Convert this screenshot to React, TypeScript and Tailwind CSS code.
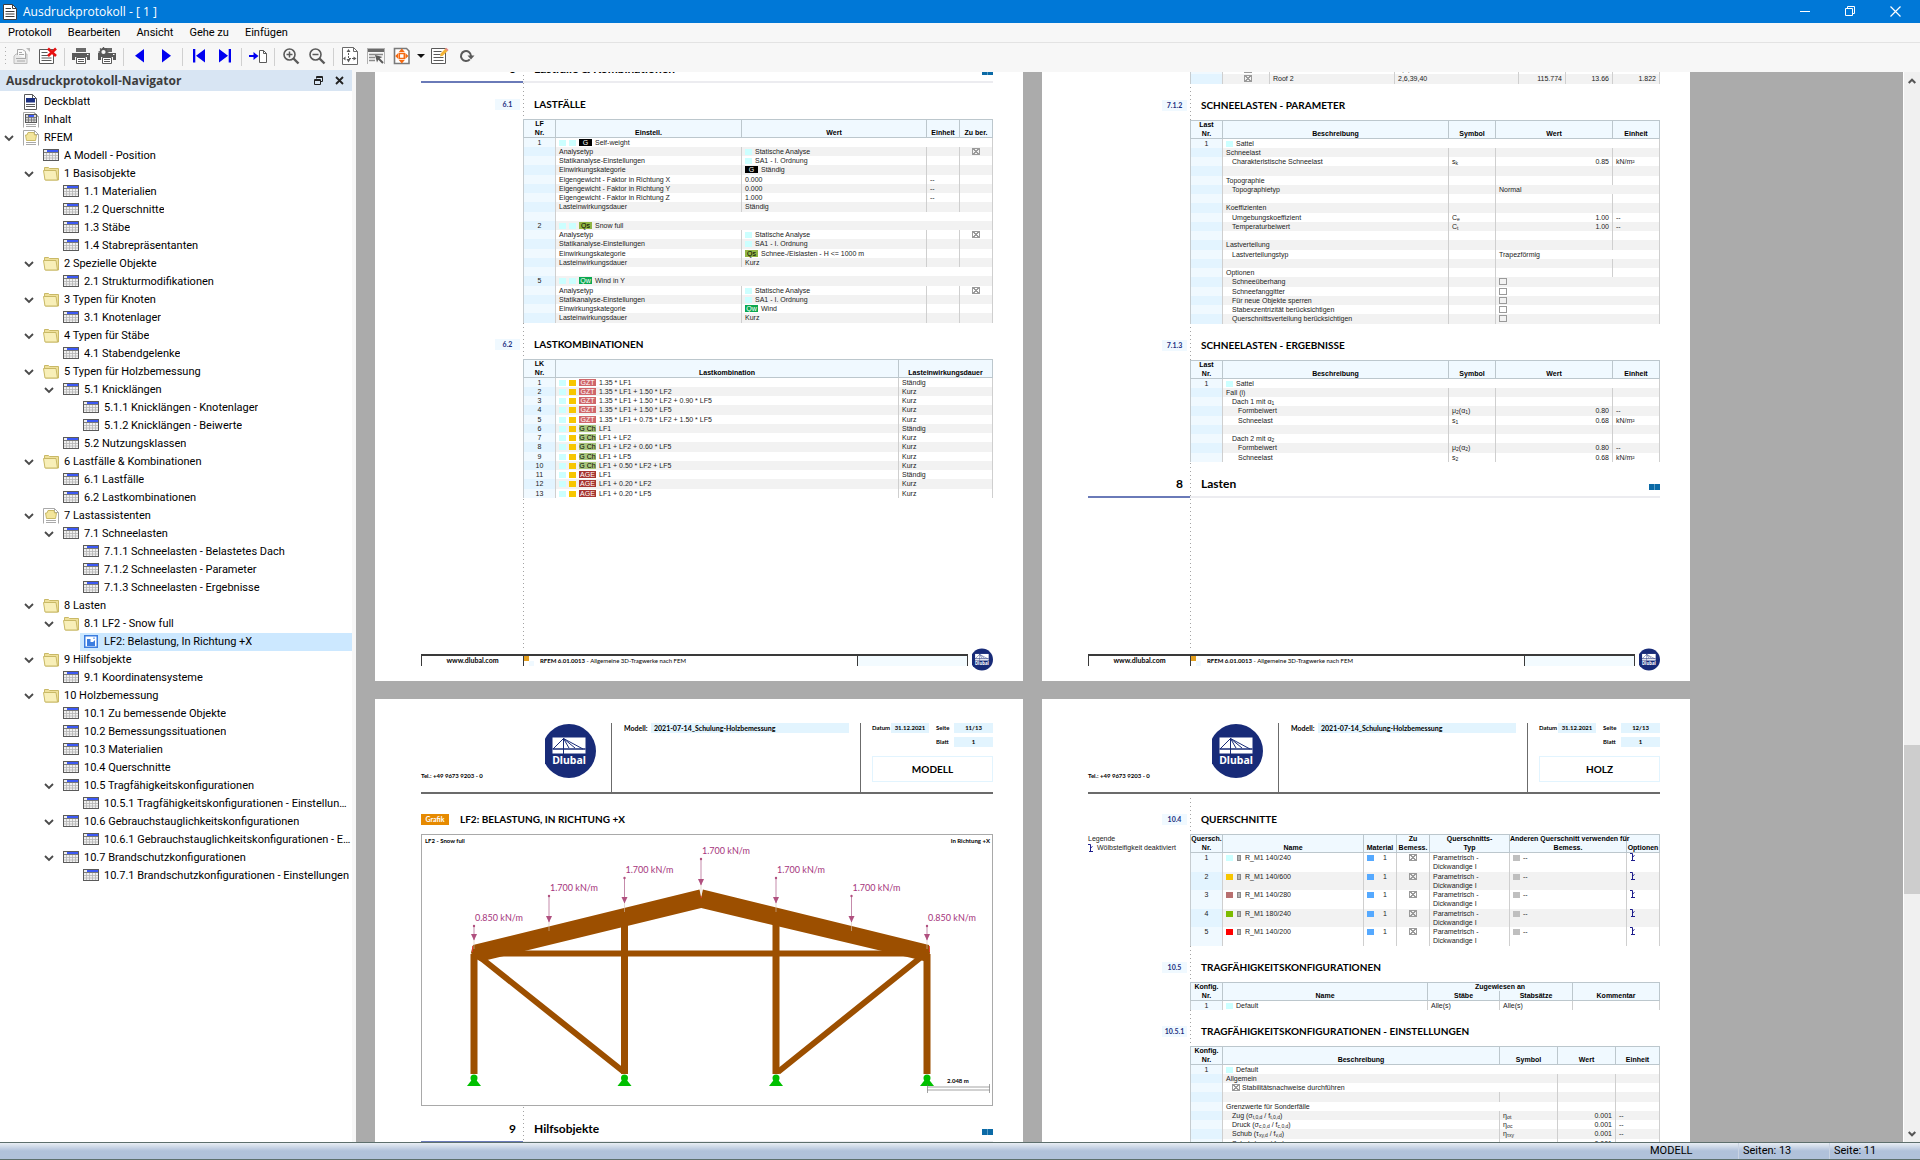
import type { ReactNode } from "react";

/* ---------- navigator data ---------- */

type IconKind = "cover" | "contents" | "model" | "table" | "folder" | "picture";

interface TreeNode {
  level: number;
  icon: IconKind;
  label: string;
  open?: boolean;
  selected?: boolean;
}

const TREE: TreeNode[] = [
  { level: 0, icon: "cover", label: "Deckblatt" },
  { level: 0, icon: "contents", label: "Inhalt" },
  { level: 0, icon: "model", label: "RFEM", open: true },
  { level: 1, icon: "table", label: "A Modell - Position" },
  { level: 1, icon: "folder", label: "1 Basisobjekte", open: true },
  { level: 2, icon: "table", label: "1.1 Materialien" },
  { level: 2, icon: "table", label: "1.2 Querschnitte" },
  { level: 2, icon: "table", label: "1.3 Stäbe" },
  { level: 2, icon: "table", label: "1.4 Stabrepräsentanten" },
  { level: 1, icon: "folder", label: "2 Spezielle Objekte", open: true },
  { level: 2, icon: "table", label: "2.1 Strukturmodifikationen" },
  { level: 1, icon: "folder", label: "3 Typen für Knoten", open: true },
  { level: 2, icon: "table", label: "3.1 Knotenlager" },
  { level: 1, icon: "folder", label: "4 Typen für Stäbe", open: true },
  { level: 2, icon: "table", label: "4.1 Stabendgelenke" },
  { level: 1, icon: "folder", label: "5 Typen für Holzbemessung", open: true },
  { level: 2, icon: "table", label: "5.1 Knicklängen", open: true },
  { level: 3, icon: "table", label: "5.1.1 Knicklängen - Knotenlager" },
  { level: 3, icon: "table", label: "5.1.2 Knicklängen - Beiwerte" },
  { level: 2, icon: "table", label: "5.2 Nutzungsklassen" },
  { level: 1, icon: "folder", label: "6 Lastfälle & Kombinationen", open: true },
  { level: 2, icon: "table", label: "6.1 Lastfälle" },
  { level: 2, icon: "table", label: "6.2 Lastkombinationen" },
  { level: 1, icon: "model", label: "7 Lastassistenten", open: true },
  { level: 2, icon: "table", label: "7.1 Schneelasten", open: true },
  { level: 3, icon: "table", label: "7.1.1 Schneelasten - Belastetes Dach" },
  { level: 3, icon: "table", label: "7.1.2 Schneelasten - Parameter" },
  { level: 3, icon: "table", label: "7.1.3 Schneelasten - Ergebnisse" },
  { level: 1, icon: "folder", label: "8 Lasten", open: true },
  { level: 2, icon: "folder", label: "8.1 LF2 - Snow full", open: true },
  { level: 3, icon: "picture", label: "LF2: Belastung, In Richtung +X", selected: true },
  { level: 1, icon: "folder", label: "9 Hilfsobjekte", open: true },
  { level: 2, icon: "table", label: "9.1 Koordinatensysteme" },
  { level: 1, icon: "folder", label: "10 Holzbemessung", open: true },
  { level: 2, icon: "table", label: "10.1 Zu bemessende Objekte" },
  { level: 2, icon: "table", label: "10.2 Bemessungssituationen" },
  { level: 2, icon: "table", label: "10.3 Materialien" },
  { level: 2, icon: "table", label: "10.4 Querschnitte" },
  { level: 2, icon: "table", label: "10.5 Tragfähigkeitskonfigurationen", open: true },
  { level: 3, icon: "table", label: "10.5.1 Tragfähigkeitskonfigurationen - Einstellungen" },
  { level: 2, icon: "table", label: "10.6 Gebrauchstauglichkeitskonfigurationen", open: true },
  { level: 3, icon: "table", label: "10.6.1 Gebrauchstauglichkeitskonfigurationen - Einstellungen" },
  { level: 2, icon: "table", label: "10.7 Brandschutzkonfigurationen", open: true },
  { level: 3, icon: "table", label: "10.7.1 Brandschutzkonfigurationen - Einstellungen" },
];

const INDENT = ["pl-0", "pl-5", "pl-10", "pl-15"];

/* ---------- tree icons ---------- */

function TreeIcon({ kind }: { kind: IconKind }) {
  if (kind === "folder")
    return (
      <svg width="16" height="16" viewBox="0 0 16 16" className="shrink-0" aria-hidden>
        <path d="M1.5 4V1.500h4l1 1h9v11.500H2.500z" fill="#efe09a" stroke="#c9b966" />
        <path d="M.5 4.500h12.500l1.500 9.500H2z" fill="#f8efb8" stroke="#c9b966" />
      </svg>
    );
  if (kind === "table")
    return (
      <svg width="16" height="16" viewBox="0 0 16 16" className="shrink-0" aria-hidden>
        <rect x=".5" y="1.500" width="15" height="11" fill="#f0f0f0" stroke="#5a5a5a" />
        <path d="M4 2h11v2H4z" fill="#3d5af5" />
        <path d="M1 4.500h14" stroke="#7a7a7a" />
        <path d="M3.500 5v7M6.500 5v7M9.500 5v7M12.500 5v7M1 7.500h14M1 10h14" stroke="#b4b4b4" strokeWidth=".8" />
      </svg>
    );
  if (kind === "picture")
    return (
      <svg width="16" height="16" viewBox="0 0 16 16" className="shrink-0" aria-hidden>
        <rect x="1.750" y="1.750" width="12.500" height="11.500" fill="#fff" stroke="#3b7de0" strokeWidth="1.500" />
        <path d="M4 5h3.500v3H10l2-2v6H4z" fill="#3b7de0" />
        <path d="M10 3.500h2v1.500h-2z" fill="#8fb6f0" />
      </svg>
    );
  if (kind === "cover")
    return (
      <svg width="16" height="16" viewBox="0 0 16 16" className="shrink-0" aria-hidden>
        <path d="M1.500.500h8l4 4v11h-12z" fill="#fff" stroke="#5a5a5a" />
        <path d="M9.500.500v4h4" fill="none" stroke="#5a5a5a" />
        <path d="M3 4h9v4.500H3z" fill="#1b2f80" />
        <path d="M3 10.500h9M3 12.500h9" stroke="#5a5a5a" />
      </svg>
    );
  return (
    <svg width="16" height="16" viewBox="0 0 16 16" className="shrink-0" aria-hidden>
      <path d="M.5 15.500v-15h11l4 4v11" fill="#fff" stroke="#a9a9a9" />
      <path d="M11.500.500v4h4" fill="none" stroke="#a9a9a9" />
      <path d="M3 12.500h10M3 14.500h10" stroke="#a9a9a9" />
      {kind === "contents" ? (
        <>
          <rect x="2.500" y="2.500" width="11" height="8" fill="#d9d9d9" stroke="#5a5a5a" />
          <path d="M5 3h6v2H5z" fill="#3d5af5" />
          <path d="M5.500 3v7M8.500 5v5M11 5v5M3 5.500h10M3 8h10" stroke="#6d6d6d" strokeWidth=".8" />
        </>
      ) : (
        <path d="M2.500 5h1.500l1-2.500h6l.5 2.500h2l-1 5.500h-9z" fill="#f3e59c" stroke="#c9b966" />
      )}
    </svg>
  );
}

function Navigator() {
  return (
    <aside className="flex w-[352px] shrink-0 flex-col bg-white">
      <header className="flex h-[21px] items-center bg-[#d8e5f3] pl-[6px] pr-[8px]">
        <h2 className="flex-1 font-['Open_Sans',sans-serif] text-[12px] font-bold leading-4 text-[#3c3c3c]">
          Ausdruckprotokoll-Navigator
        </h2>
        <button type="button" aria-label="Abdocken" className="mr-3">
          <svg width="9" height="9" viewBox="0 0 9 9" fill="none" stroke="#222" aria-hidden>
            <path d="M2.500 2.500v-2h6v5h-2M2.500 1.500h6" />
            <path d="M.5 3.500h6v5h-6zM.5 4.500h6" />
          </svg>
        </button>
        <button type="button" aria-label="Schließen">
          <svg width="9" height="9" viewBox="0 0 9 9" stroke="#222" strokeWidth="1.800" aria-hidden>
            <path d="M1 1l7 7M8 1l-7 7" />
          </svg>
        </button>
      </header>
      <ul className="pt-[2px] font-['Roboto',sans-serif] text-[11px] leading-[18px] text-black">
        {TREE.map((n) => (
          <li key={n.label} className={`flex h-[18px] ${INDENT[n.level]}`}>
            <span className="flex w-5 shrink-0 items-center pl-1">
              {n.open && (
                <svg width="10" height="7" viewBox="0 0 10 7" fill="none" stroke="#4a4a4a" strokeWidth="1.800" aria-hidden>
                  <path d="M1 1l4 4 4-4" />
                </svg>
              )}
            </span>
            <button
              type="button"
              className={`flex min-w-0 flex-1 items-center gap-[5px] pl-[3px] text-left ${n.selected ? "bg-[#cce8ff]" : ""}`}
            >
              <TreeIcon kind={n.icon} />
              <span className="truncate">{n.label}</span>
            </button>
          </li>
        ))}
      </ul>
    </aside>
  );
}

/* ---------- window chrome ---------- */

function TitleBar() {
  return (
    <header className="flex h-[23px] shrink-0 items-center bg-[#0078d7] pl-[3px] pr-[2px] text-white">
      <svg width="14" height="16" viewBox="0 0 14 16" aria-hidden>
        <path d="M.5.500h9l4 4v11H.5z" fill="#fff" stroke="#3d3d3d" />
        <path d="M9.500.500v4h4" fill="none" stroke="#3d3d3d" />
        <path d="M2.500 4.500H8M2.500 7.500h9M2.500 10h9M2.500 12.500h9" stroke="#3d3d3d" />
      </svg>
      <h1 className="flex-1 pl-[6px] font-['Open_Sans',sans-serif] text-[12px] leading-4">Ausdruckprotokoll - [ 1 ]</h1>
      <button type="button" aria-label="Minimieren" className="flex h-5 w-[45px] items-center justify-center">
        <svg width="11" height="11" viewBox="0 0 11 11" stroke="#fff" aria-hidden>
          <path d="M0 5.500h10" />
        </svg>
      </button>
      <button type="button" aria-label="Wiederherstellen" className="flex h-5 w-[45px] items-center justify-center">
        <svg width="11" height="11" viewBox="0 0 11 11" stroke="#fff" fill="none" aria-hidden>
          <path d="M.5 2.500h7v7h-7zM2.500 2.500v-2h7v7h-2" />
        </svg>
      </button>
      <button type="button" aria-label="Fenster schließen" className="flex h-5 w-[45px] items-center justify-center">
        <svg width="11" height="11" viewBox="0 0 11 11" stroke="#fff" strokeWidth="1.200" aria-hidden>
          <path d="M.5.500l10 10M10.500.500l-10 10" />
        </svg>
      </button>
    </header>
  );
}

function Tool({ label, children }: { label: string; children: ReactNode }) {
  return (
    <button type="button" aria-label={label} title={label} className="flex h-[25px] w-[26px] items-center justify-center">
      <svg width="18" height="18" viewBox="0 0 18 18" fill="none" aria-hidden>
        {children}
      </svg>
    </button>
  );
}

function Sep() {
  return <span className="mx-[3px] h-[18px] w-px bg-[#d0d0d0]" />;
}

function Printer() {
  return (
    <g>
      <path d="M4 1h10v4H4z" fill="#6a6a6a" />
      <path d="M0 6h18v7h-3v-3H3v3H0z" fill="#5a5a5a" />
      <path d="M4.500 10.500h9v6h-9z" fill="#fff" stroke="#5a5a5a" />
      <path d="M6 12.500h6M6 14.500h6" stroke="#5a5a5a" />
      <path d="M15 7.500h1.500" stroke="#fff" />
    </g>
  );
}

function ToolBar() {
  return (
    <div className="flex h-[27px] shrink-0 items-start bg-[#f7f7f7] pl-1 [&>span]:self-center">
      <svg width="5" height="25" viewBox="0 0 5 25" aria-hidden>
        <path d="M1 4h1v1H1zM1 8h1v1H1zM1 12h1v1H1zM1 16h1v1H1zM1 20h1v1H1z" fill="#b0b0b0" />
      </svg>
      <Tool label="Öffnen">
        <path d="M1 9l2-2h11v9.500H1z" fill="#e9e9e9" stroke="#bdbdbd" />
        <path d="M4.500 8V2.500h5l3 2V11" fill="#fafafa" stroke="#a8a8a8" />
        <path d="M6 5.500h3M6 7.500h5M3 11.500h10M4 14h8" stroke="#a8a8a8" />
        <path d="M13 1h4v4z" fill="#bdbdbd" />
      </Tool>
      <Tool label="Ausdruckprotokoll löschen">
        <path d="M.5 2.500h14v14H.5z" fill="#fff" stroke="#5a5a5a" />
        <path d="M2.500 5.500h6M2.500 8.500h8M2.500 11h10M2.500 13.500h10" stroke="#5a5a5a" />
        <path d="M9 1.500l8 7.500M17 1.500l-8 7.500" stroke="#e81111" strokeWidth="2.600" />
      </Tool>
      <Sep />
      <Tool label="Drucken">
        <Printer />
      </Tool>
      <Tool label="Druckeinstellungen">
        <Printer />
        <circle cx="5.500" cy="5" r="3" fill="#f7f7f7" stroke="#5a5a5a" strokeWidth="1.800" />
        <path d="M5.500 0v2M5.500 8v2M.5 5h2M8.500 5h2M2 1.500l1.300 1.300M9 1.500L7.700 2.800M2 8.500l1.300-1.300M9 8.500L7.700 7.200" stroke="#5a5a5a" strokeWidth="1.400" />
      </Tool>
      <Sep />
      <Tool label="Vorherige Seite">
        <path d="M13 2v13.500L4 8.700z" fill="#0000f0" />
      </Tool>
      <Tool label="Nächste Seite">
        <path d="M5 2v13.500l9-6.800z" fill="#0000f0" />
      </Tool>
      <Sep />
      <Tool label="Erste Seite">
        <path d="M3 2h2.300v13.500H3zM15 2v13.500L6 8.700z" fill="#0000f0" />
      </Tool>
      <Tool label="Letzte Seite">
        <path d="M12.700 2H15v13.500h-2.300zM3 2v13.500l9-6.800z" fill="#0000f0" />
      </Tool>
      <Sep />
      <Tool label="Gehe zu Seite">
        <path d="M0 8h4.500V5L9.500 9l-5 4v-3H0z" fill="#0000f0" />
        <path d="M10.500 3.500h4l3 3v9h-7z" fill="#fff" stroke="#5a5a5a" />
        <path d="M14.500 3.500v3h3" stroke="#5a5a5a" />
      </Tool>
      <Sep />
      <Tool label="Vergrößern">
        <circle cx="7.500" cy="7.500" r="5.500" stroke="#5a5a5a" strokeWidth="1.600" />
        <path d="M4.500 7.500h6M7.500 4.500v6" stroke="#5a5a5a" strokeWidth="1.500" />
        <path d="M11.500 11.500l5 5" stroke="#5a5a5a" strokeWidth="2.400" />
      </Tool>
      <Tool label="Verkleinern">
        <circle cx="7.500" cy="7.500" r="5.500" stroke="#5a5a5a" strokeWidth="1.600" />
        <path d="M4.500 7.500h6" stroke="#5a5a5a" strokeWidth="1.500" />
        <path d="M11.500 11.500l5 5" stroke="#5a5a5a" strokeWidth="2.400" />
      </Tool>
      <Sep />
      <Tool label="Ganze Seite">
        <path d="M1.500.500h11l4 4v13h-15z" fill="#fff" stroke="#6a6a6a" />
        <path d="M12.500.500v4h4" stroke="#6a6a6a" />
        <path d="M7.500 3v8.500h6" stroke="#5a5a5a" strokeDasharray="2 1" />
        <path d="M5.500 5l2-3 2 3zM5.500 12l2 3.500 2-3.500zM12.500 9.500l3 2-3 2zM4.500 9.500l-2.500 2 2.500 2z" fill="#5a5a5a" />
      </Tool>
      <Tool label="Auswahl">
        <path d="M0 1.500h18v3.500H0z" fill="#6a6a6a" />
        <path d="M.5 1v16M17.500 1v16" stroke="#b0b0b0" />
        <path d="M2 7.500h14M2 10.500h6M2 13.500h6" stroke="#8a8a8a" strokeWidth="1.500" />
        <path d="M8 8l7.500 2-2.800 1.300 4 4-1.400 1.400-4-4-1.300 2.800z" fill="#5a5a5a" />
      </Tool>
      <Tool label="Seitenbreite">
        <path d="M1.500 1.500h12l2.500 2.500v12.500H1.500z" fill="#fff" stroke="#7a7a7a" strokeWidth="1.600" />
        <path d="M8.800 1.500l3 3.500h-6zM8.800 16.500l3-3.500h-6zM2.200 9l3-3v6zM15.400 9l-3-3v6z" fill="#f56a12" />
        <path d="M6.300 6.500h5v5h-5z" stroke="#f56a12" strokeWidth="1.500" />
      </Tool>
      <button type="button" aria-label="Weitere Ansichten" className="flex h-[26px] w-3 items-center justify-center">
        <svg width="8" height="4" viewBox="0 0 8 4" aria-hidden>
          <path d="M0 0h8L4 4z" fill="#111" />
        </svg>
      </button>
      <Tool label="Protokoll bearbeiten">
        <path d="M.5 1.500h14v15H.5z" fill="#fff" stroke="#5a5a5a" />
        <path d="M2.500 4.500h8M2.500 7.500h7M2.500 10.500h10M2.500 13.500h10" stroke="#5a5a5a" />
        <path d="M9 9.500l.7-3L14.500 1.500l2.300 2.300-5 5z" fill="#f3b336" />
        <path d="M14 2l1.300-1.300 2.300 2.200L16.300 4.300z" fill="#e58a8a" />
      </Tool>
      <Tool label="Aktualisieren">
        <path d="M12.800 12.300A5 5 0 1 1 14 9" stroke="#5a5a5a" strokeWidth="2" />
        <path d="M10.500 8.500h7L14 12.500z" fill="#5a5a5a" />
      </Tool>
    </div>
  );
}

function StatusBar() {
  return (
    <footer className="flex h-[18px] shrink-0 items-center justify-end border-y border-[#5d6f6d] bg-linear-to-b from-[#e9eef4] to-[#b0c1da] to-50% font-['Roboto',sans-serif] text-[11px] leading-4 text-black">
      <span className="w-[90px] pl-[2px]">MODELL</span>
      <span className="w-[91px] border-l border-[#c9d3e2] pl-1">Seiten: 13</span>
      <span className="w-[91px] border-l border-[#c9d3e2] pl-1">Seite: 11</span>
    </footer>
  );
}

/* ---------- report parts ---------- */

function Logo({ className }: { className: string }) {
  return (
    <svg viewBox="0 0 51 54" className={className} role="img" aria-label="Dlubal">
      <circle cx="24" cy="27" r="27" fill="#182b78" />
      <path d="M7.500 13.500h33v16h-33z" fill="#fff" />
      <path d="M7.500 25h33" stroke="#182b78" strokeWidth="1.600" />
      <path d="M18.500 14v16M18.500 14.500L8 25M18.500 14.500L24 24M18.500 14.500L30 24M18.500 14.500L38 25" stroke="#182b78" fill="none" />
      <text x="24" y="40" textAnchor="middle" fill="#fff" fontSize="10.500" fontWeight="700" fontFamily="Noto Sans, sans-serif">
        Dlubal
      </text>
    </svg>
  );
}

function Swatch({ className = "bg-[#ccffff]" }: { className?: string }) {
  return <span className={`h-[6px] w-[7px] shrink-0 ${className}`} />;
}

function Tag({ className, children }: { className: string; children: ReactNode }) {
  return <span className={`shrink-0 text-center text-[7px] leading-[7px] ${className}`}>{children}</span>;
}

function Line({ children }: { children: ReactNode }) {
  return <span className="flex h-[9px] items-center gap-[3px] whitespace-nowrap">{children}</span>;
}

function Box({ label, checked = false }: { label?: string; checked?: boolean }) {
  return (
    <input
      type="checkbox"
      aria-label={label}
      checked={checked}
      readOnly
      className="block h-[7px] w-[8px] shrink-0 appearance-none border border-[#9a9a9a] checked:bg-[linear-gradient(45deg,transparent_42%,#9a9a9a_42%,#9a9a9a_58%,transparent_58%),linear-gradient(-45deg,transparent_42%,#9a9a9a_42%,#9a9a9a_58%,transparent_58%)]"
    />
  );
}

/* bracket with arrow, marks deactivated warping stiffness */
function WarpIcon() {
  return (
    <svg width="6" height="8" viewBox="0 0 6 8" fill="none" stroke="#1d1d8c" aria-hidden>
      <path d="M0 .5h2.500v6.500M1 7.500h4M2.500 4l2-1.500" />
    </svg>
  );
}

function Section({ nr, title }: { nr: string; title: string }) {
  return (
    <div className="grid grid-cols-[102px_1fr] pb-[9px] pt-4 font-['Lato',sans-serif] font-bold leading-[11px]">
      <span className="ml-auto mr-[3px] h-[11px] w-[25px] bg-[#f0f9ff] text-center text-[7px] text-[#1b2f80]">{nr}</span>
      <h3 className="whitespace-nowrap pl-[11px] text-[10px] text-black">{title}</h3>
    </div>
  );
}

function Chapter({ nr, title }: { nr: string; title: string }) {
  return (
    <div className="grid grid-cols-[102px_1fr] font-['Lato',sans-serif] text-[12px] font-bold leading-3 text-black">
      <span className="border-b-2 border-[#6a7ab8] pb-[6px] pr-[7px] pt-4 text-right">{nr}</span>
      <div className="flex items-end justify-between border-b-2 border-[#ececf0] pb-[6px] pl-[11px] pt-4">
        <h2>{title}</h2>
        <svg width="11" height="6" viewBox="0 0 11 6" aria-hidden>
          <path d="M0 0h11v6H0z" fill="#0b6aa6" />
          <path d="M5.500 0v6" stroke="#8fc0dc" strokeWidth=".6" />
        </svg>
      </div>
    </div>
  );
}

interface SheetTableProps {
  cols: string[];
  head?: string[];
  children: ReactNode;
  aside?: ReactNode;
  tall?: boolean;
  thead?: ReactNode;
}

const TH = "border-b border-l border-[#bcc7cd] bg-[#f0f9ff] p-0 align-bottom font-bold last:border-r";

function SheetTable({ cols, head, children, aside, tall, thead }: SheetTableProps) {
  return (
    <div className="grid grid-cols-[102px_1fr] font-['Liberation_Sans',sans-serif] text-[7px] leading-[9px] text-[#222]">
      <div>{aside}</div>
      <table className="w-full table-fixed border-separate border-spacing-0 bg-white">
        <colgroup>
          {cols.map((c, i) => (
            <col key={i} className={c} />
          ))}
        </colgroup>
        {head && (
          <thead className="text-black">
            <tr>
              {head.map((h) => (
                <th key={h} scope="col" className={`${TH} whitespace-pre shadow-[inset_0_1px_0_#bcc7cd]`}>
                  {h}
                </th>
              ))}
            </tr>
          </thead>
        )}
        {thead}
        <tbody
          className={`[&>tr:nth-child(even)>td:first-child]:bg-[#e3f4ff] [&>tr:nth-child(even)]:bg-[#f2f2f2] ${
            tall ? "[&>tr]:h-[18px] [&>tr:nth-child(odd)]:h-[19px]" : "[&>tr]:h-[9px] [&>tr:nth-child(4n)]:h-[10px]"
          }`}
        >
          {children}
        </tbody>
      </table>
    </div>
  );
}

function Row({ nr, children }: { nr?: string; children?: ReactNode }) {
  return (
    <tr>
      <td className="border-l border-[#c6ccd0] bg-[#f0f9ff] p-0 text-center align-top">{nr}</td>
      {children}
    </tr>
  );
}

type CellPad = "a" | "b" | "c" | "right" | "center";

const PAD: Record<CellPad, string> = {
  a: "pl-[3px]",
  b: "pl-[9px]",
  c: "pl-[15px]",
  right: "pr-[3px] text-right",
  center: "text-center",
};

function C({ span, pad = "a", children }: { span?: number; pad?: CellPad; children?: ReactNode }) {
  return (
    <td colSpan={span} className={`whitespace-nowrap border-l border-[#cfcfcf] py-0 align-top last:border-r ${PAD[pad]}`}>
      {children}
    </td>
  );
}

/* ---------- 6.1 load cases ---------- */

const G = <Tag className="w-[13px] bg-black text-white">G</Tag>;
const QS = <Tag className="w-[13px] bg-[#92b544] text-black">Qs</Tag>;
const QW = <Tag className="w-[13px] bg-[#0aa84f] text-white">Qw</Tag>;

interface LoadCase {
  nr: string;
  tag: ReactNode;
  name: string;
  category: string;
  factors: [string, string][];
  duration: string;
}

const LOAD_CASES: LoadCase[] = [
  {
    nr: "1",
    tag: G,
    name: "Self-weight",
    category: "Ständig",
    factors: [
      ["X", "0.000"],
      ["Y", "0.000"],
      ["Z", "1.000"],
    ],
    duration: "Ständig",
  },
  { nr: "2", tag: QS, name: "Snow full", category: "Schnee-/Eislasten - H <= 1000 m", factors: [], duration: "Kurz" },
  { nr: "5", tag: QW, name: "Wind in Y", category: "Wind", factors: [], duration: "Kurz" },
];

function loadCaseRows(lc: LoadCase, last: boolean) {
  return [
    <Row key={lc.nr} nr={lc.nr}>
      <C span={4}>
        <Line>
          <Swatch />
          <Swatch />
          {lc.tag}
          {lc.name}
        </Line>
      </C>
    </Row>,
    <Row key={lc.nr + "a"}>
      <C>Analysetyp</C>
      <C>
        <Line>
          <Swatch />
          Statische Analyse
        </Line>
      </C>
      <C />
      <C pad="center">
        <span className="flex h-[9px] items-center justify-center">
          <Box checked label="Zu berechnen" />
        </span>
      </C>
    </Row>,
    <Row key={lc.nr + "s"}>
      <C>Statikanalyse-Einstellungen</C>
      <C>
        <Line>
          <Swatch />
          SA1 - I. Ordnung
        </Line>
      </C>
      <C />
      <C />
    </Row>,
    <Row key={lc.nr + "e"}>
      <C>Einwirkungskategorie</C>
      <C>
        <Line>
          {lc.tag}
          {lc.category}
        </Line>
      </C>
      <C />
      <C />
    </Row>,
    ...lc.factors.map(([axis, value]) => (
      <Row key={lc.nr + axis}>
        <C>Eigengewicht - Faktor in Richtung {axis}</C>
        <C>{value}</C>
        <C>--</C>
        <C />
      </Row>
    )),
    <Row key={lc.nr + "d"}>
      <C>Lasteinwirkungsdauer</C>
      <C>{lc.duration}</C>
      <C />
      <C />
    </Row>,
    !last && (
      <Row key={lc.nr + "x"}>
        <C span={4} />
      </Row>
    ),
  ];
}

/* ---------- 6.2 load combinations ---------- */

const COMBOS: [string, string, string][] = [
  ["GZT", "1.35 * LF1", "Ständig"],
  ["GZT", "1.35 * LF1 + 1.50 * LF2", "Kurz"],
  ["GZT", "1.35 * LF1 + 1.50 * LF2 + 0.90 * LF5", "Kurz"],
  ["GZT", "1.35 * LF1 + 1.50 * LF5", "Kurz"],
  ["GZT", "1.35 * LF1 + 0.75 * LF2 + 1.50 * LF5", "Kurz"],
  ["G Ch", "LF1", "Ständig"],
  ["G Ch", "LF1 + LF2", "Kurz"],
  ["G Ch", "LF1 + LF2 + 0.60 * LF5", "Kurz"],
  ["G Ch", "LF1 + LF5", "Kurz"],
  ["G Ch", "LF1 + 0.50 * LF2 + LF5", "Kurz"],
  ["AGE", "LF1", "Ständig"],
  ["AGE", "LF1 + 0.20 * LF2", "Kurz"],
  ["AGE", "LF1 + 0.20 * LF5", "Kurz"],
];

const COMBO_TAG: Record<string, string> = {
  GZT: "w-[17px] bg-[#cf666a] text-white",
  "G Ch": "w-[17px] bg-[#a9c57c] text-black",
  AGE: "w-[17px] bg-[#a63430] text-white",
};

/* ---------- snow load tables ---------- */

interface SnowProps {
  text?: ReactNode;
  pad?: CellPad;
  sym?: ReactNode;
  value?: string;
  unit?: string;
  wide?: string;
  box?: string;
}

function Snow({ text, pad, sym, value, unit, wide, box }: SnowProps) {
  return (
    <Row>
      <C pad={pad}>{text}</C>
      <C>{sym}</C>
      {wide || box ? (
        <C span={2}>
          {wide}
          {box && (
            <span className="flex h-[9px] items-center">
              <Box label={box} />
            </span>
          )}
        </C>
      ) : (
        <>
          <C pad="right">{value}</C>
          <C>{unit}</C>
        </>
      )}
    </Row>
  );
}

function Sub({ children }: { children: ReactNode }) {
  return <sub className="text-[5px] leading-none">{children}</sub>;
}

function SattelRow() {
  return (
    <Row nr="1">
      <C span={4}>
        <Line>
          <Swatch />
          Sattel
        </Line>
      </C>
    </Row>
  );
}

const SNOW_COLS = ["w-[32px]", "w-[226px]", "w-[47px]", "w-[117px]", ""];
const SNOW_HEAD = ["Last\nNr.", "Beschreibung", "Symbol", "Wert", "Einheit"];
const SNOW_OPTIONS = [
  "Schneeüberhang",
  "Schneefanggitter",
  "Für neue Objekte sperren",
  "Stabexzentrizität berücksichtigen",
  "Querschnittsverteilung berücksichtigen",
];

/* ---------- pages ---------- */

const DOTS = "bg-[linear-gradient(#a3a3a3_1px,transparent_1px)] bg-[length:1px_4px] bg-[position:102px_0] bg-repeat-y";

function PageFooter() {
  return (
    <footer className="flex items-center gap-1 pb-[10px] font-['Lato',sans-serif] text-[6px] leading-[9px] text-black">
      <div className="grid h-3 flex-1 grid-cols-[102px_334px_1fr] border-r border-t-2 border-[#3a3a3a]">
        <a href="https://www.dlubal.com" className="border-l border-[#3a3a3a] text-center text-[7px] font-bold">
          www.dlubal.com
        </a>
        <div className="flex border-l border-[#3a3a3a]">
          <span className="h-[5px] w-[5px] bg-[#e5a01e]" />
          <span className="mt-[5px] h-[5px] w-[5px] bg-[#f0f9ff]" />
          <span className="whitespace-nowrap pl-[6px]">
            <b>RFEM 6.01.0013</b> - Allgemeine 3D-Tragwerke nach FEM
          </span>
        </div>
        <div className="border-l border-[#3a3a3a] bg-[#f3fbff]" />
      </div>
      <Logo className="h-[23px] w-[21px]" />
    </footer>
  );
}

function PageHeader({ page, chapter }: { page: string; chapter: string }) {
  const field = "h-[10px] bg-[#e2f4fe]";
  return (
    <header className="mb-1 mt-6 grid h-[71px] grid-cols-[190px_249px_1fr] border-b-2 border-[#6b6b6b] font-['Lato',sans-serif] text-[7px] font-bold leading-[10px] text-black">
      <div className="flex justify-between pr-[15px] pt-px">
        <p className="mb-[11px] self-end whitespace-nowrap text-[6px]">Tel.: +49 9673 9203 - 0</p>
        <Logo className="h-[54px] w-[51px]" />
      </div>
      <div className="flex border-l border-[#6b6b6b] pl-3 pr-[11px]">
        <span className="w-[27px]">Modell:</span>
        <span className={`${field} flex-1 pl-[3px]`}>2021-07-14_Schulung-Holzbemessung</span>
      </div>
      <div className="border-l border-[#6b6b6b] pl-[11px]">
        <div className="grid grid-cols-[19px_38px_1fr_39px] gap-y-1 text-[6px]">
          <span>Datum</span>
          <span className={`${field} text-center`}>31.12.2021</span>
          <span className="pl-[7px]">Seite</span>
          <span className={`${field} text-center`}>{page}</span>
          <span className="col-start-3 pl-[7px]">Blatt</span>
          <span className={`${field} text-center`}>1</span>
        </div>
        <p className="mt-[9px] border border-[#e2f4fe] text-center text-[10px] leading-6">{chapter}</p>
      </div>
    </header>
  );
}

function Page({ top, children }: { top?: boolean; children: ReactNode }) {
  return <article className={`flex flex-col bg-white pl-[46px] pr-[30px] ${top ? "h-[634px]" : "h-[840px]"}`}>{children}</article>;
}

function LoadCasePage() {
  return (
    <Page top>
      <div className={`flex-1 ${DOTS}`}>
        <Chapter nr="6" title="Lastfälle & Kombinationen" />
        <Section nr="6.1" title="LASTFÄLLE" />
        <SheetTable
          cols={["w-[32px]", "w-[186px]", "w-[185px]", "w-[33px]", ""]}
          head={["LF\nNr.", "Einstell.", "Wert", "Einheit", "Zu ber."]}
        >
          {LOAD_CASES.map((lc, i) => loadCaseRows(lc, i === LOAD_CASES.length - 1))}
        </SheetTable>
        <Section nr="6.2" title="LASTKOMBINATIONEN" />
        <SheetTable cols={["w-[32px]", "w-[343px]", ""]} head={["LK\nNr.", "Lastkombination", "Lasteinwirkungsdauer"]}>
          {COMBOS.map(([tag, formula, duration], i) => (
            <Row key={i} nr={String(i + 1)}>
              <C>
                <Line>
                  <Swatch />
                  <Swatch className="bg-[#f7c600]" />
                  <Tag className={COMBO_TAG[tag]}>{tag}</Tag>
                  {formula}
                </Line>
              </C>
              <C>{duration}</C>
            </Row>
          ))}
        </SheetTable>
      </div>
      <PageFooter />
    </Page>
  );
}

function SnowPage() {
  return (
    <Page top>
      <div className={`flex-1 ${DOTS}`}>
        <SheetTable cols={["w-[32px]", "w-[47px]", "w-[125px]", "w-[124px]", "w-[47px]", "w-[47px]", ""]}>
          {["Roof 1", "Roof 1", "Roof 1", "Roof 2"].map((roof, i) => (
            <Row key={i}>
              <C>
                <span className="flex h-[9px] items-center justify-center">
                  <Box checked label={roof} />
                </span>
              </C>
              <C>{roof}</C>
              <C>{i === 3 ? "2,6,39,40" : "1,5,38"}</C>
              <C pad="right">115.774</C>
              <C pad="right">13.66</C>
              <C pad="right">1.822</C>
            </Row>
          ))}
        </SheetTable>
        <Section nr="7.1.2" title="SCHNEELASTEN - PARAMETER" />
        <SheetTable cols={SNOW_COLS} head={SNOW_HEAD}>
          <SattelRow />
          <Snow text="Schneelast" />
          <Snow pad="b" text="Charakteristische Schneelast" sym={<>s<Sub>k</Sub></>} value="0.85" unit="kN/m²" />
          <Snow />
          <Snow text="Topographie" />
          <Snow pad="b" text="Topographietyp" wide="Normal" />
          <Snow />
          <Snow text="Koeffizienten" />
          <Snow pad="b" text="Umgebungskoeffizient" sym={<>C<Sub>e</Sub></>} value="1.00" unit="--" />
          <Snow pad="b" text="Temperaturbeiwert" sym={<>C<Sub>t</Sub></>} value="1.00" unit="--" />
          <Snow />
          <Snow text="Lastverteilung" />
          <Snow pad="b" text="Lastverteilungstyp" wide="Trapezförmig" />
          <Snow />
          <Snow text="Optionen" />
          {SNOW_OPTIONS.map((o) => (
            <Snow key={o} pad="b" text={o} box={o} />
          ))}
        </SheetTable>
        <Section nr="7.1.3" title="SCHNEELASTEN - ERGEBNISSE" />
        <SheetTable cols={SNOW_COLS} head={SNOW_HEAD}>
          <SattelRow />
          <Snow text="Fall (i)" />
          <Snow pad="b" text={<>Dach 1 mit α<Sub>1</Sub></>} />
          <Snow pad="c" text="Formbeiwert" sym={<>μ<Sub>2</Sub>(α<Sub>1</Sub>)</>} value="0.80" unit="--" />
          <Snow pad="c" text="Schneelast" sym={<>s<Sub>1</Sub></>} value="0.68" unit="kN/m²" />
          <Snow />
          <Snow pad="b" text={<>Dach 2 mit α<Sub>2</Sub></>} />
          <Snow pad="c" text="Formbeiwert" sym={<>μ<Sub>2</Sub>(α<Sub>2</Sub>)</>} value="0.80" unit="--" />
          <Snow pad="c" text="Schneelast" sym={<>s<Sub>2</Sub></>} value="0.68" unit="kN/m²" />
        </SheetTable>
        <Chapter nr="8" title="Lasten" />
      </div>
      <PageFooter />
    </Page>
  );
}

/* x, arrow top, arrow tip, text */
const LOADS: [number, number, number, string][] = [
  [53, 92, 106, "0.850 kN/m"],
  [128, 62, 88, "1.700 kN/m"],
  [203.5, 44, 69, "1.700 kN/m"],
  [280, 25, 51, "1.700 kN/m"],
  [355, 44, 69, "1.700 kN/m"],
  [430.5, 62, 88, "1.700 kN/m"],
  [506, 92, 106, "0.850 kN/m"],
];

function FrameDrawing() {
  return (
    <svg viewBox="0 0 572 272" className="block h-auto w-full" fontFamily="Lato, sans-serif">
      <rect x=".5" y=".5" width="571" height="271" fill="#fff" stroke="#a9a9a9" />
      <text x="4" y="8.500" fontSize="6" fontWeight="700">LF2 - Snow full</text>
      <text x="569" y="8.500" fontSize="6" fontWeight="700" textAnchor="end">In Richtung +X</text>
      <g stroke="#9c4f00" strokeWidth="7" fill="none">
        <path d="M53 120v120M203.500 88v152M355 88v152M506 120v120" />
        <path d="M58 119.500h444" strokeWidth="6" />
        <path d="M60 124L203 238M499 124L357 238" strokeWidth="6" />
      </g>
      <path
        d="M52 111L278.500 55.500l1.700 8 1.700-8L508 111l1 8-3 9-7-2L280.200 74 60 127.500l-8-4-2-5z"
        fill="#9c4f00"
      />
      <path d="M51.500 112v6M508.500 112v6M280.200 62v2" stroke="#e33" strokeWidth=".8" />
      {[53, 203.5, 355, 506].map((x) => (
        <g key={x} fill="#00c000">
          <circle cx={x} cy="244" r="3.500" />
          <path d={`M${x} 243l7 9h-14z`} />
        </g>
      ))}
      {LOADS.map(([x, top, tip, text]) => (
        <g key={x}>
          <path d={`M${x} ${top}V${tip}`} stroke="#c58bab" />
          <circle cx={x} cy={top} r="1.200" fill="#b0507f" />
          <path d={`M${x - 3} ${tip - 6}h6l-3 6.500z`} fill="#b0507f" />
          <path d={`M${x} ${tip}v9`} stroke="#d9c2b4" strokeWidth=".6" />
          <text x={x + 1} y={top - 5} fontSize="9" fill="#a5347c">
            {text}
          </text>
        </g>
      ))}
      <text x="526" y="248.500" fontSize="6" fontWeight="700">2.048 m</text>
      <path d="M506.500 250v9M568.500 250v9M506.500 253h62M506.500 256h62" stroke="#666" strokeWidth=".6" />
    </svg>
  );
}

function GraphicPage() {
  return (
    <Page>
      <PageHeader page="11/13" chapter="MODELL" />
      <div className="flex pb-[9px] pt-4 font-['Lato',sans-serif] font-bold leading-[11px]">
        <span className="w-[28px] bg-[#e68a00] text-center text-[7px] text-white">Grafik</span>
        <h3 className="pl-[11px] text-[10px] text-black">LF2: BELASTUNG, IN RICHTUNG +X</h3>
      </div>
      <FrameDrawing />
      <div className={`mt-px ${DOTS}`}>
        <Chapter nr="9" title="Hilfsobjekte" />
      </div>
    </Page>
  );
}

const CROSS_SECTIONS: [string, string][] = [
  ["R_M1 140/240", "bg-[#ccffff]"],
  ["R_M1 140/600", "bg-[#f7c600]"],
  ["R_M1 140/280", "bg-[#b87070]"],
  ["R_M1 180/240", "bg-[#7dbb00]"],
  ["R_M1 140/200", "bg-[#ff0000]"],
];

const LIMITS: [string, string, string, string][] = [
  ["Zug (σ", "t,0,d", "t,0,d", "σt"],
  ["Druck (σ", "c,0,d", "c,0,d", "σc"],
  ["Schub (τ", "xy,d", "v,d", "τxy"],
  ["Schub (τ", "xz,d", "v,d", "τxz"],
];

function TimberPage() {
  return (
    <Page>
      <PageHeader page="12/13" chapter="HOLZ" />
      <div className={`flex-1 ${DOTS}`}>
        <Section nr="10.4" title="QUERSCHNITTE" />
        <SheetTable
          tall
          cols={["w-[32px]", "w-[141px]", "w-[33px]", "w-[33px]", "w-[80px]", "w-[117px]", ""]}
          head={["Quersch.\nNr.", "Name", "Material", "Zu\nBemess.", "Querschnitts-\nTyp", "Anderen Querschnitt verwenden für\nBemess.", "Optionen"]}
          aside={
            <div>
              <p>Legende</p>
              <Line>
                <WarpIcon />
                Wölbsteifigkeit deaktiviert
              </Line>
            </div>
          }
        >
          {CROSS_SECTIONS.map(([name, color], i) => (
            <Row key={name} nr={String(i + 1)}>
              <C>
                <Line>
                  <Swatch className={color} />
                  <span className="mx-px h-[6px] w-[4px] border border-[#8a8a8a] bg-[#b5b5b5]" />
                  {name}
                </Line>
              </C>
              <C>
                <span className="flex h-[9px] items-center gap-[9px]">
                  <Swatch className="bg-[#55a9ff]" />1
                </span>
              </C>
              <C>
                <span className="flex h-[9px] items-center justify-center pr-[3px]">
                  <Box checked label={name} />
                </span>
              </C>
              <C>
                Parametrisch -<br />
                Dickwandige I
              </C>
              <C>
                <Line>
                  <Swatch className="bg-[#bfbfbf]" />
                  --
                </Line>
              </C>
              <C>
                <WarpIcon />
              </C>
            </Row>
          ))}
        </SheetTable>
        <Section nr="10.5" title="TRAGFÄHIGKEITSKONFIGURATIONEN" />
        <SheetTable
          cols={["w-[32px]", "w-[205px]", "w-[72px]", "w-[73px]", ""]}
          thead={
            <thead className="text-black">
              <tr className="[&>th]:shadow-[inset_0_1px_0_#bcc7cd]">
                <th rowSpan={2} className={TH}>
                  Konfig.
                  <br />
                  Nr.
                </th>
                <th rowSpan={2} className={TH}>Name</th>
                <th colSpan={2} className="border-l border-[#bcc7cd] bg-[#f0f9ff] p-0">
                  Zugewiesen an
                </th>
                <th rowSpan={2} className={TH}>Kommentar</th>
              </tr>
              <tr>
                <th className="border-b border-l border-[#bcc7cd] bg-[#f0f9ff] p-0">Stäbe</th>
                <th className="border-b border-l border-[#bcc7cd] bg-[#f0f9ff] p-0">Stabsätze</th>
              </tr>
            </thead>
          }
        >
          <Row nr="1">
            <C>
              <Line>
                <Swatch />
                Default
              </Line>
            </C>
            <C>Alle(s)</C>
            <C>Alle(s)</C>
            <C />
          </Row>
        </SheetTable>
        <Section nr="10.5.1" title="TRAGFÄHIGKEITSKONFIGURATIONEN - EINSTELLUNGEN" />
        <SheetTable
          cols={["w-[32px]", "w-[277px]", "w-[58px]", "w-[58px]", ""]}
          head={["Konfig.\nNr.", "Beschreibung", "Symbol", "Wert", "Einheit"]}
        >
          <Row nr="1">
            <C span={4}>
              <Line>
                <Swatch />
                Default
              </Line>
            </C>
          </Row>
          <Row>
            <C span={2}>Allgemein</C>
            <C />
            <C />
          </Row>
          <Row>
            <C span={2} pad="b">
              <label className="flex h-[9px] items-center gap-[2px]">
                <Box checked />
                Stabilitätsnachweise durchführen
              </label>
            </C>
            <C />
            <C />
          </Row>
          <Row>
            <C />
            <C />
            <C />
            <C />
          </Row>
          <Row>
            <C span={2}>Grenzwerte für Sonderfälle</C>
            <C />
            <C />
          </Row>
          {LIMITS.map(([text, s1, s2, eta]) => (
            <Row key={eta}>
              <C pad="b">
                {text}
                <Sub>{s1}</Sub> / f<Sub>{s2}</Sub>)
              </C>
              <C>
                η<Sub>{eta}</Sub>
              </C>
              <C pad="right">0.001</C>
              <C>--</C>
            </Row>
          ))}
        </SheetTable>
      </div>
    </Page>
  );
}

function ScrollBar() {
  return (
    <div className="flex w-[17px] shrink-0 flex-col border-l border-white bg-[#f0f0f0]">
      <button type="button" aria-label="Nach oben" className="flex h-[17px] items-center justify-center">
        <svg width="8" height="6" viewBox="0 0 8 6" fill="none" stroke="#555" strokeWidth="2" aria-hidden>
          <path d="M.7 5L4 1.700 7.300 5" />
        </svg>
      </button>
      <div className="flex-[656]" />
      <div className="flex-[149] bg-[#cdcdcd]" />
      <div className="flex-[231]" />
      <button type="button" aria-label="Nach unten" className="flex h-[17px] items-center justify-center">
        <svg width="8" height="6" viewBox="0 0 8 6" fill="none" stroke="#555" strokeWidth="2" aria-hidden>
          <path d="M.7 1L4 4.300 7.300 1" />
        </svg>
      </button>
    </div>
  );
}

const MENU = ["Protokoll", "Bearbeiten", "Ansicht", "Gehe zu", "Einfügen"];

export default function App() {
  return (
    <div className="flex h-screen flex-col overflow-hidden bg-[#f7f7f7]">
      <TitleBar />
      <nav className="flex h-5 shrink-0 items-end border-b border-[#e3e3e3] bg-[#f7f7f7] font-['Roboto',sans-serif] text-[11px] leading-[18px] text-black">
        {MENU.map((m) => (
          <button key={m} type="button" className="px-2">
            {m}
          </button>
        ))}
      </nav>
      <ToolBar />
      <div className="flex min-h-0 flex-1">
        <Navigator />
        <div className="flex min-w-0 flex-1 pl-1 pt-[2px]">
          <main className="min-w-0 flex-1 overflow-hidden bg-[#ababab]">
            <div className="-mt-[25px] grid grid-cols-[648px_648px] gap-x-[19px] gap-y-[18px] pl-[19px]">
              <LoadCasePage />
              <SnowPage />
              <GraphicPage />
              <TimberPage />
            </div>
          </main>
          <ScrollBar />
        </div>
      </div>
      <StatusBar />
    </div>
  );
}
